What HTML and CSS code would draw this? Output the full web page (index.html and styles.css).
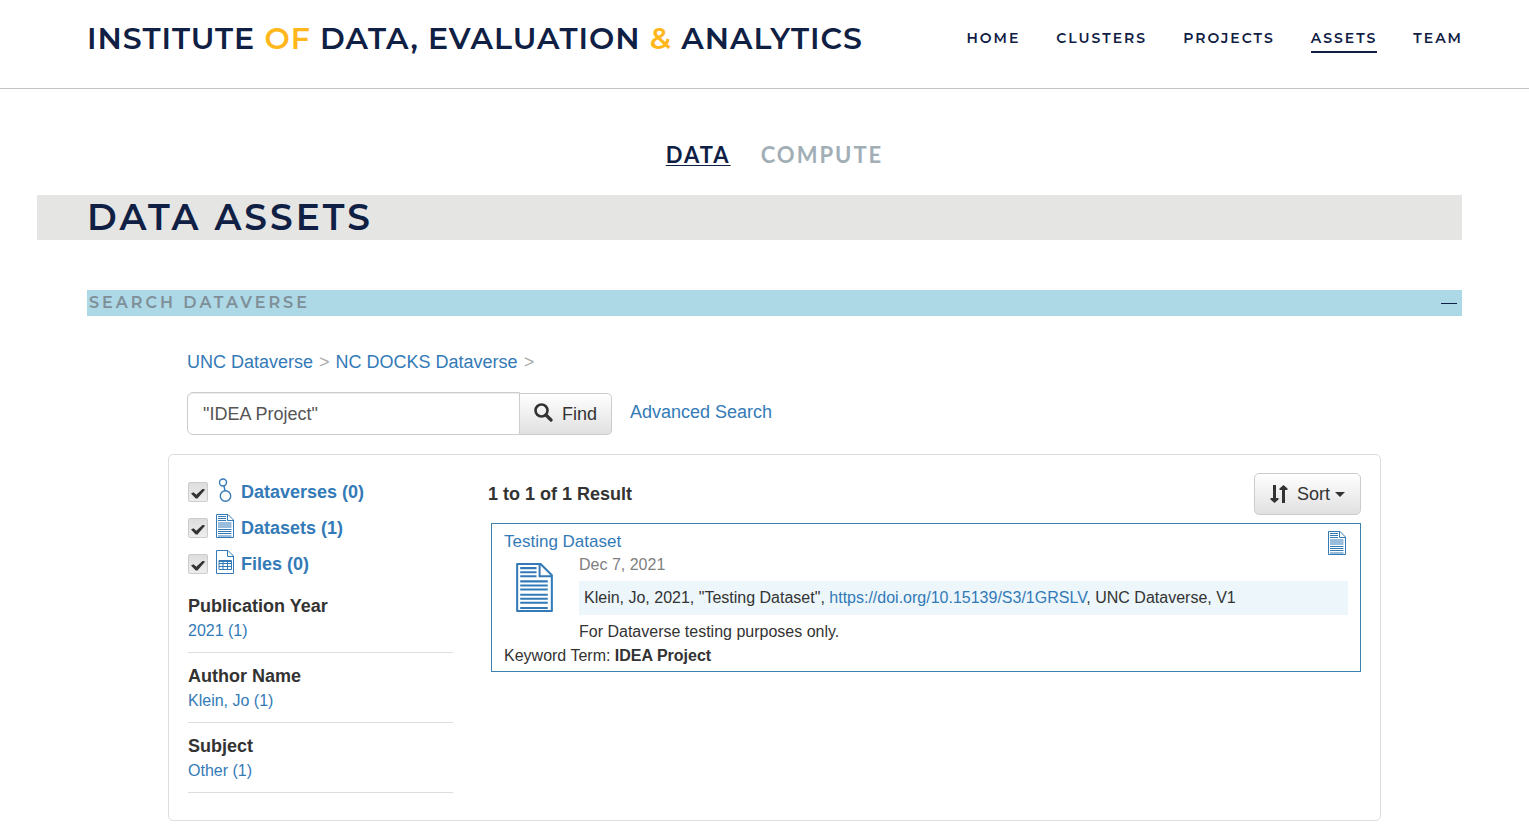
FILE: index.html
```html
<!DOCTYPE html>
<html lang="en">
<head>
<meta charset="utf-8">
<title>Data Assets</title>
<link rel="stylesheet" href="styles.css">
</head>
<body>
<svg class="sprite" aria-hidden="true">
  <symbol id="doc" viewBox="0 0 36 48">
    <path d="M1 1H24L35 12V47H1Z" fill="none" stroke="currentColor" stroke-width="2" stroke-linejoin="round"/>
    <path d="M23 1V13H35" fill="none" stroke="currentColor" stroke-width="2"/>
    <path d="M4 5H20M4 9H20M4 13H20M4 18H31M4 22H31M4 26H31M4 31H31M4 35H31M4 39H31M4 44H31" stroke="currentColor" stroke-width="2"/>
  </symbol>
</svg>
<header class="site-header">
  <a class="brand" href="#">INSTITUTE <span class="gold">OF</span> DATA, EVALUATION <span class="gold">&amp;</span> ANALYTICS</a>
  <nav class="site-nav">
    <a href="#">HOME</a><a href="#">CLUSTERS</a><a href="#">PROJECTS</a><a class="active" href="#">ASSETS</a><a href="#">TEAM</a>
  </nav>
</header>
<main>
  <nav class="tabs"><a class="current" href="#">DATA</a><a href="#">COMPUTE</a></nav>
  <h1>DATA ASSETS</h1>
  <section class="accordion">
    <button class="accordion-head" type="button"><span>SEARCH DATAVERSE</span><span class="minus"></span></button>
    <div class="dataverse">
      <nav class="crumbs"><a href="#">UNC Dataverse</a><span>&gt;</span><a href="#">NC DOCKS Dataverse</a><span>&gt;</span></nav>
      <form class="search">
        <input class="query" type="text" aria-label="Search this dataverse" value="&quot;IDEA Project&quot;">
        <button class="btn find" type="button"><svg width="19" height="19" viewBox="0 0 19 19"><circle cx="7.500" cy="7.500" r="6" fill="none" stroke="currentColor" stroke-width="2.600"/><path d="M12 12L17 17" stroke="currentColor" stroke-width="3.200" stroke-linecap="round"/></svg>Find</button>
        <a href="#">Advanced Search</a>
      </form>
      <div class="panel">
        <aside class="facets">
          <div class="types">
            <label><input type="checkbox" checked><svg class="icon" viewBox="0 0 18 24"><g fill="none" stroke="currentColor" stroke-width="1.400"><circle cx="7" cy="4.500" r="3.500"/><circle cx="9.500" cy="18" r="5.200"/><path d="M8 8L9 13"/></g></svg><a href="#">Dataverses (0)</a></label>
            <label><input type="checkbox" checked><svg class="icon"><use href="#doc"/></svg><a href="#">Datasets (1)</a></label>
            <label><input type="checkbox" checked><svg class="icon" viewBox="0 0 18 24"><g fill="none" stroke="currentColor"><path d="M.5.5H12L17.500 6V23.500H.5ZM11.500.5V6.500H17.500"/><path d="M3 10.500H15.500V19.500H3ZM3 13.500H15.500M3 16.500H15.500M7 10.500V19.500M11.500 10.500V19.500"/><path d="M3 11.500H15.500"/></g></svg><a href="#">Files (0)</a></label>
          </div>
          <section class="facet"><h2>Publication Year</h2><a href="#">2021 (1)</a></section>
          <section class="facet"><h2>Author Name</h2><a href="#">Klein, Jo (1)</a></section>
          <section class="facet"><h2>Subject</h2><a href="#">Other (1)</a></section>
        </aside>
        <div class="results">
          <div class="results-head"><strong>1 to 1 of 1 Result</strong>
            <button class="btn sort" type="button"><svg width="18" height="18" viewBox="0 0 18 18" fill="currentColor"><path d="M3 0H6V13H8.500V14.500L4.500 18L.5 14.500V13H3ZM12 18V5H9.500V3.500L13.500 0L17.500 3.500V5H15V18Z"/></svg>Sort<span class="caret"></span></button>
          </div>
          <article class="result">
            <div class="result-top"><a href="#">Testing Dataset</a><svg class="icon tag"><use href="#doc"/></svg></div>
            <div class="result-body">
              <svg class="thumb"><use href="#doc"/></svg>
              <div class="info">
                <div class="date">Dec 7, 2021</div>
                <p class="citation">Klein, Jo, 2021, "Testing Dataset", <a href="#">https://doi.org/10.15139/S3/1GRSLV</a>, UNC Dataverse, V1</p>
                <p class="desc">For Dataverse testing purposes only.</p>
              </div>
            </div>
            <p class="keyword">Keyword Term: <b>IDEA Project</b></p>
          </article>
        </div>
      </div>
    </div>
  </section>
</main>
</body>
</html>
```
FILE: styles.css
```css
* { box-sizing: border-box; }
body { margin: 0; background: #fff; color: #333; font: 18px/24px "Liberation Sans", Arial, sans-serif; }
a { color: #337ab7; text-decoration: none; }
p, h1, h2 { margin: 0; }
.sprite { display: none; }
.site-header { display: flex; justify-content: space-between; align-items: flex-start; padding: 19px 66px 29px 87px; border-bottom: 1px solid #c3c3c3; font-family: Montserrat, Inter, sans-serif; font-weight: 600; }
.brand { color: #0f2044; font-size: 30px; line-height: 40px; letter-spacing: 1px; white-space: nowrap; }
.gold { color: #ffb71b; }
.site-nav { display: flex; gap: 36px; padding-top: 9px; }
.site-nav a { color: #0f2044; font-size: 14px; line-height: 20px; padding-bottom: 3px; letter-spacing: 2px; border-bottom: 2px solid transparent; }
.site-nav .active { border-color: #0f2044; }
main { padding: 53px 67px 16px 37px; }
.tabs { display: flex; justify-content: center; gap: 30px; padding-left: 50px; margin-bottom: 27px; font: 700 22px/26px Lato, sans-serif; letter-spacing: 2px; }
.tabs a { color: #a2aeb6; }
.tabs .current { color: #0f2044; text-decoration: underline; text-decoration-thickness: 1px; text-underline-offset: 2px; }
h1 { background: #e5e5e3; color: #0f2044; font: 600 36px/45px Montserrat, Inter, sans-serif; letter-spacing: 3px; padding-left: 50px; }
.accordion { margin: 50px 0 0 50px; }
.accordion-head { display: flex; justify-content: space-between; align-items: center; width: 100%; padding: 0 5px 0 2px; border: 0; background: #add8e6; color: #7f8f98; font: 600 16px/26px Montserrat, Inter, sans-serif; letter-spacing: 3px; }
.minus { width: 16px; height: 1px; background: #0f2044; }
.dataverse { padding: 34px 81px 0; }
.crumbs { display: flex; gap: 6px; padding-left: 19px; }
.crumbs span { color: #aaa; }
.search { display: flex; align-items: center; padding-left: 19px; margin: 18px 0 19px; }
.search > a { padding-bottom: 4px; }
.query { width: 333px; height: 43px; padding: 7px 15px 5px; border: 1px solid #ccc; border-radius: 6px 0 0 6px; color: #555; font: inherit; box-shadow: inset 0 1px 1px #00000013; }
.btn { display: flex; align-items: center; height: 42px; border: 1px solid #ccc; border-radius: 5px; background: linear-gradient(#fff, #e0e0e0); color: #333; font: inherit; }
.find { gap: 9px; padding: 0 14px; margin-right: 18px; border-left: 0; border-radius: 0 5px 5px 0; }
.find svg { margin-bottom: 3px; }
.panel { display: grid; grid-template-columns: 265px 1fr; gap: 35px; padding: 18px 19px 17px; border: 1px solid #ddd; border-radius: 5px; }
.types { display: flex; flex-direction: column; gap: 12px; padding-top: 7px; margin-bottom: 17px; font-weight: bold; }
.types label { display: flex; align-items: center; height: 24px; }
.types input { appearance: none; width: 20px; height: 20px; margin: 0 8px 0 0; padding-top: 3px; border: 1px solid #ccc; border-radius: 2px; background: linear-gradient(#ddd, #eee); display: grid; place-items: center; }
.types input:checked::before { content: ""; width: 14px; height: 10px; background: #333; clip-path: polygon(0 50%, 18% 38%, 38% 62%, 86% 0, 100% 12%, 46% 100%, 34% 100%); }
.icon { width: 18px; height: 24px; color: #337ab7; }
.types .icon { margin: 0 7px 4px 0; }
.facet { padding-bottom: 9px; margin-bottom: 10px; border-bottom: 1px solid #ddd; font-size: 16px; }
h2 { font-size: 18px; line-height: 26px; }
.results-head { display: flex; justify-content: space-between; align-items: center; margin-bottom: 8px; }
.sort { gap: 9px; padding: 0 15px; }
.caret { margin-left: -4px; border: 5px solid transparent; border-top-color: #333; border-bottom: 0; }
.result { margin-left: 3px; padding: 7px 12px 4px; border: 1px solid #3f81ae; font-size: 16px; }
.result-top { display: flex; justify-content: space-between; height: 23px; line-height: 22px; }
.result-top a { font-size: 17px; }
.tag { margin-right: 2px; }
.result-body { display: flex; align-items: flex-start; }
.thumb { flex: none; width: 37px; height: 49px; margin: 9px 26px 0 12px; color: #337ab7; }
.info { flex: 1; }
.date { color: #808080; line-height: 22px; }
.citation { margin: 5px 0; padding: 5px; background: #ecf6fb; }
.desc { line-height: 24px; }
.keyword { line-height: 23px; }
```
